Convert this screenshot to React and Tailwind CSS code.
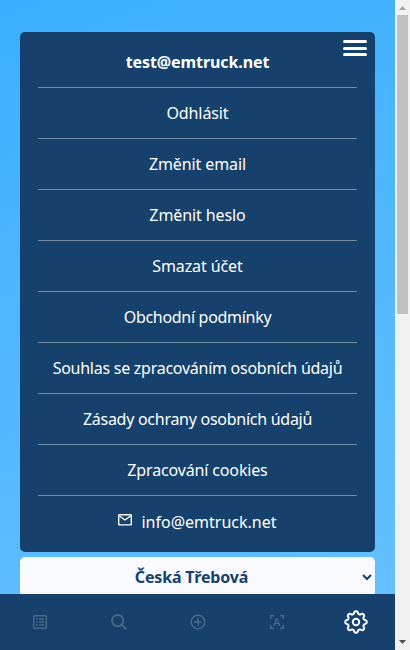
import React from 'react';
import { RiAddCircleLine } from 'react-icons/ri';

const links = [
  ['Odhlásit', 'tracking-[-0.1px]'],
  ['Změnit email', 'tracking-[-0.1px]'],
  ['Změnit heslo', 'tracking-[-0.1px]'],
  ['Smazat účet', 'tracking-[-0.1px]'],
  ['Obchodní podmínky', 'tracking-[-0.3px]'],
  ['Souhlas se zpracováním osobních údajů', 'tracking-[-0.26px]'],
  ['Zásady ochrany osobních údajů', 'tracking-[-0.27px]'],
  ['Zpracování cookies', 'tracking-[-0.15px]'],
];

function ListIcon() {
  return (
    <svg width="14" height="14" viewBox="0 0 14 14" fill="none" stroke="currentColor" strokeWidth="1.4">
      <rect x="0.7" y="0.7" width="12.6" height="12.6" rx="1" />
      <path d="M3 4h1.6M6 4h5M3 7h1.6M6 7h5M3 10h1.6M6 10h5" />
    </svg>
  );
}

function SearchIcon() {
  return (
    <svg width="16" height="16" viewBox="0 0 16 16" fill="none" stroke="currentColor" strokeWidth="1.8">
      <circle cx="6.7" cy="6.7" r="5.7" />
      <path d="m10.8 10.8 4.6 4.6" />
    </svg>
  );
}

function ScanIcon() {
  return (
    <span className="relative grid size-[14px] place-items-center">
      <svg className="absolute inset-0" width="14" height="14" viewBox="0 0 14 14" fill="none" stroke="currentColor" strokeWidth="1.4">
        <path d="M.7 4V.7H4M10 .7h3.3V4M13.3 10v3.3H10M4 13.3H.7V10" />
      </svg>
      <span className="text-[11px] leading-[14px] font-medium">A</span>
    </span>
  );
}

function MailIcon() {
  return (
    <svg className="-mt-1" width="14" height="12" viewBox="0 0 14 12" fill="none" stroke="currentColor" strokeWidth="1.4">
      <rect x="0.7" y="0.7" width="12.6" height="10.2" rx="0.6" />
      <path d="m1.5 2 5.5 4 5.5-4" />
    </svg>
  );
}

// Outline of an eight-lobed cog, sampled around the circle.
const cogPoints = Array.from({ length: 160 }, (_, i) => {
  const a = (i / 160) * Math.PI * 2;
  const r = 9.5 + 1.3 * Math.tanh(1.6 * Math.cos(8 * a));
  return `${(12 + r * Math.cos(a)).toFixed(2)},${(12 + r * Math.sin(a)).toFixed(2)}`;
}).join(' ');

function CogIcon() {
  return (
    <svg className="text-white" width="24" height="24" viewBox="0 0 24 24" fill="none" stroke="currentColor" strokeWidth="2" strokeLinejoin="round">
      <polygon points={cogPoints} />
      <circle cx="12" cy="12" r="3.2" />
    </svg>
  );
}

function Scrollbar() {
  return (
    <div className="flex h-full w-[15px] shrink-0 flex-col items-center bg-[#f1f1f1]">
      <svg className="shrink-0" width="15" height="15" viewBox="0 0 15 15"><path d="M7.5 6 11 10H4z" fill="#a3a3a3" /></svg>
      <div className="h-[299px] w-[11px] bg-[#c1c1c1]" />
      <svg className="mt-auto shrink-0" width="15" height="15" viewBox="0 0 15 15"><path d="M4 5h7L7.5 9z" fill="#505050" /></svg>
    </div>
  );
}

export default function App() {
  return (
    <div className="flex h-[650px] w-[410px] overflow-hidden font-['Noto_Sans','Open_Sans',sans-serif] text-base">
      <div className="flex h-full w-[395px] flex-col bg-[linear-gradient(160deg,#3caeff_0%,#67c1ff_100%)]">
        <main className="h-[594px] overflow-hidden px-5 pt-8">
          <section className="relative h-[520px] rounded-[5px] bg-[#16416d] px-[18px] pt-[5px] text-center text-white">
            <button className="absolute top-2 right-2 flex h-4 w-6 flex-col justify-between" aria-label="Menu">
              <span className="h-[3px] w-full rounded-full bg-white" />
              <span className="h-[3px] w-full rounded-full bg-white" />
              <span className="h-[3px] w-full rounded-full bg-white" />
            </button>
            <div className="h-[51px] border-b border-[#738da7] leading-[50px] font-bold tracking-[-0.1px]">test@emtruck.net</div>
            {links.map(([label, spacing]) => (
              <div key={label} className={`h-[51px] border-b border-[#738da7] leading-[50px] whitespace-nowrap ${spacing}`}>{label}</div>
            ))}
            <div className="flex h-[51px] items-center justify-center gap-[9px] leading-[50px]">
              <MailIcon />
              <span>info@emtruck.net</span>
            </div>
          </section>
          <div className="mt-[5px] flex h-10 items-center rounded-[5px] bg-[#f9faff] pl-px font-bold text-[#16416d]">
            <span className="flex-1 text-center tracking-[-0.18px]">Česká Třebová</span>
            <svg className="mr-[3px]" width="10" height="8" viewBox="0 0 10 8" fill="none" stroke="currentColor" strokeWidth="2"><path d="m1 2 4 4 4-4" /></svg>
          </div>
        </main>
        <nav className="grid h-14 grid-cols-5 place-items-center bg-[#16416d] text-[#4b6a86]">
          <ListIcon />
          <SearchIcon />
          <RiAddCircleLine className="size-[18px]" />
          <ScanIcon />
          <CogIcon />
        </nav>
      </div>
      <Scrollbar />
    </div>
  );
}
